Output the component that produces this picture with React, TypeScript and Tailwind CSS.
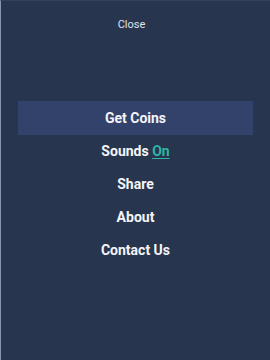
import React from 'react';

const items = ['Share', 'About', 'Contact Us'];

export default function App() {
  return (
    <div
      className="w-[270px] h-[360px] bg-[#28354f] border-l border-l-[#8797ae] border-t border-t-[#34425c] flex flex-col text-white"
      style={{ fontFamily: 'Roboto, "Liberation Sans", sans-serif' }}
    >
      <div className="h-[49px] pr-[8px] flex items-center justify-center text-[11px] text-[#dfe3ea]">
        Close
      </div>
      <div className="mt-[51px] flex flex-col px-[17px]">
        <button className="h-[34px] bg-[#33426b] flex items-center justify-center text-[14px] font-bold text-[#f4f5f8]">
          Get Coins
        </button>
        <div className="h-[33px] flex items-center justify-center text-[14px] font-bold text-[#f4f5f8]">
          Sounds&nbsp;<span className="text-[#2fb5a3] underline underline-offset-2">On</span>
        </div>
        {items.map((label) => (
          <div
            key={label}
            className="h-[33px] flex items-center justify-center text-[14px] font-bold text-[#f4f5f8]"
          >
            {label}
          </div>
        ))}
      </div>
    </div>
  );
}
